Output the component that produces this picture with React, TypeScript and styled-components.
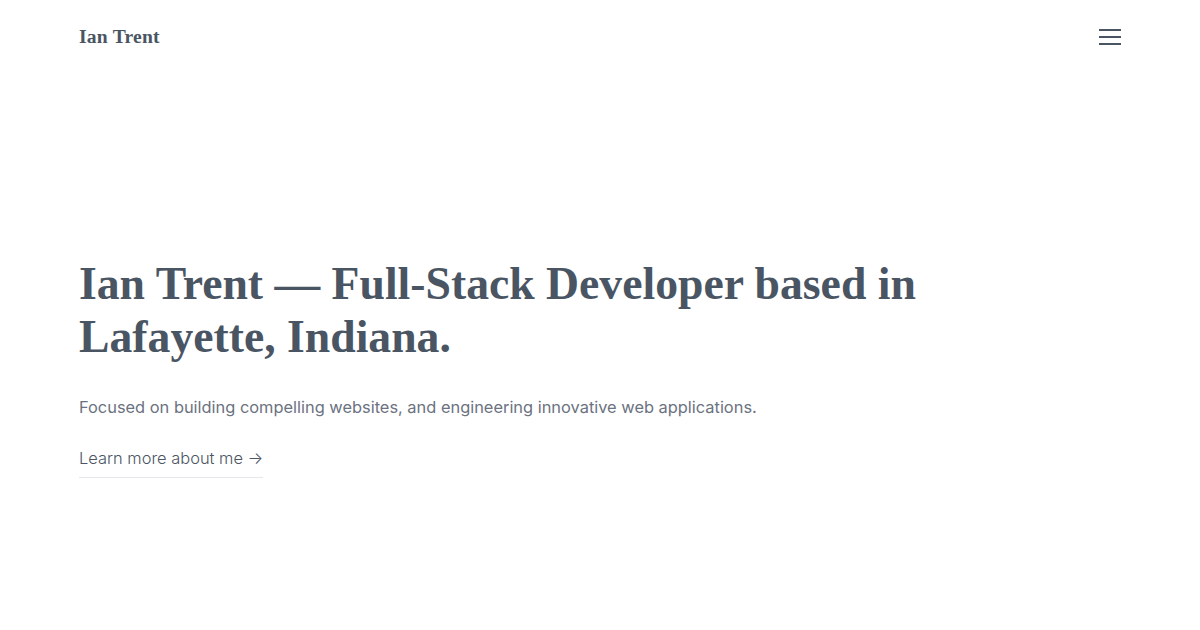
import React from "react";
import styled, { createGlobalStyle } from "styled-components";

const Global = createGlobalStyle`
  html, body { margin: 0; padding: 0; background: #ffffff; }
  body { font-family: Inter, "Noto Sans", sans-serif; -webkit-font-smoothing: antialiased; }
  * { box-sizing: border-box; }
`;

const Page = styled.div`
  width: 1200px;
  height: 630px;
  display: flex;
  flex-direction: column;
  padding: 0 79px;
`;

const Header = styled.header`
  height: 74px;
  display: flex;
  align-items: center;
  justify-content: space-between;
`;

const Brand = styled.a`
  font-family: "Liberation Serif", "DejaVu Serif", serif;
  font-weight: 700;
  font-size: 19.6px;
  color: #4a5563;
  text-decoration: none;
  letter-spacing: 0.2px;
`;

const MenuButton = styled.button`
  width: 22px;
  height: 16px;
  padding: 0;
  border: 0;
  background: none;
  display: flex;
  flex-direction: column;
  justify-content: space-between;
`;

const Bar = styled.span`
  display: block;
  width: 22px;
  height: 2px;
  background: #4a5563;
`;

const Hero = styled.main`
  padding-top: 183px;
  display: flex;
  flex-direction: column;
  align-items: flex-start;
`;

const Title = styled.h1`
  margin: 0;
  font-family: "Liberation Serif", "DejaVu Serif", serif;
  font-weight: 700;
  font-size: 45.7px;
  line-height: 53px;
  color: #4a5563;
  max-width: 880px;
`;

const Lead = styled.p`
  margin: 32px 0 0;
  font-size: 16.4px;
  line-height: 24px;
  color: #6b7280;
`;

const MoreLink = styled.a`
  margin-top: 27px;
  font-size: 16.45px;
  font-weight: 300;
  line-height: 24px;
  color: #4b5563;
  text-decoration: none;
  padding-bottom: 7px;
  border-bottom: 1px solid #e5e7eb;
`;

export default function App() {
  return (
    <>
      <Global />
      <Page>
        <Header>
          <Brand href="#">Ian Trent</Brand>
          <MenuButton aria-label="Menu">
            <Bar />
            <Bar />
            <Bar />
          </MenuButton>
        </Header>
        <Hero>
          <Title>Ian Trent — Full-Stack Developer based in Lafayette, Indiana.</Title>
          <Lead>Focused on building compelling websites, and engineering innovative web applications.</Lead>
          <MoreLink href="#">Learn more about me →</MoreLink>
        </Hero>
      </Page>
    </>
  );
}
